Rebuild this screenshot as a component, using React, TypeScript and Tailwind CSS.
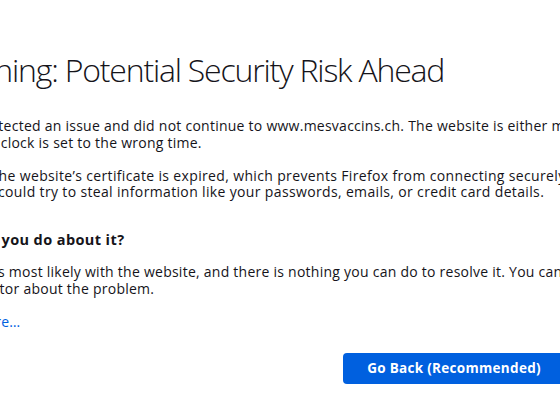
export default function App() {
  return (
    <div className="h-[416px] w-[560px] overflow-hidden bg-white font-['Open_Sans',sans-serif] text-[#15141a]">
      <div className="ml-[-69px] w-[634px] pt-[48px]">
        <h1 className="ml-[9px] whitespace-nowrap text-[32px] font-light leading-[44px] tracking-[-1.2px] text-[#15141a]">
          Warning: Potential Security Risk Ahead
        </h1>
        <div className="mt-[26px] text-[14px] leading-[16.5px] tracking-[0.25px]">
          <p className="whitespace-nowrap">
            Firefox detected an issue and did not continue to www.mesvaccins.ch. The website is either misconfigured or your
            <br />
            computer clock is set to the wrong time.
          </p>
          <p className="mt-[16.5px] whitespace-nowrap tracking-[0.35px]">
            It’s likely the website’s certificate is expired, which prevents Firefox from connecting securely. If you visit this site,
            <br />
            attackers could try to steal information like your passwords, emails, or credit card details.
          </p>
        </div>
        <h2 className="ml-[-5px] mt-[31px] whitespace-nowrap text-[14.5px] font-bold leading-[16.5px] tracking-[0.4px]">
          What can you do about it?
        </h2>
        <p className="ml-[-4px] mt-[16px] whitespace-nowrap text-[14px] leading-[16.5px] tracking-[0.25px]">
          The issue is most likely with the website, and there is nothing you can do to resolve it. You can notify the website’s
          <br />
          administrator about the problem.
        </p>
        <a href="#" className="mt-[17px] block text-[14px] leading-[16.5px] tracking-[0.25px] text-[#0060df]">
          Learn more…
        </a>
        <div className="mt-[22px] flex justify-end">
          <button className="h-[31px] w-[222px] rounded-[4px] bg-[#0060df] text-[13.5px] font-bold tracking-[0.3px] text-white">
            Go Back (Recommended)
          </button>
        </div>
      </div>
    </div>
  );
}
